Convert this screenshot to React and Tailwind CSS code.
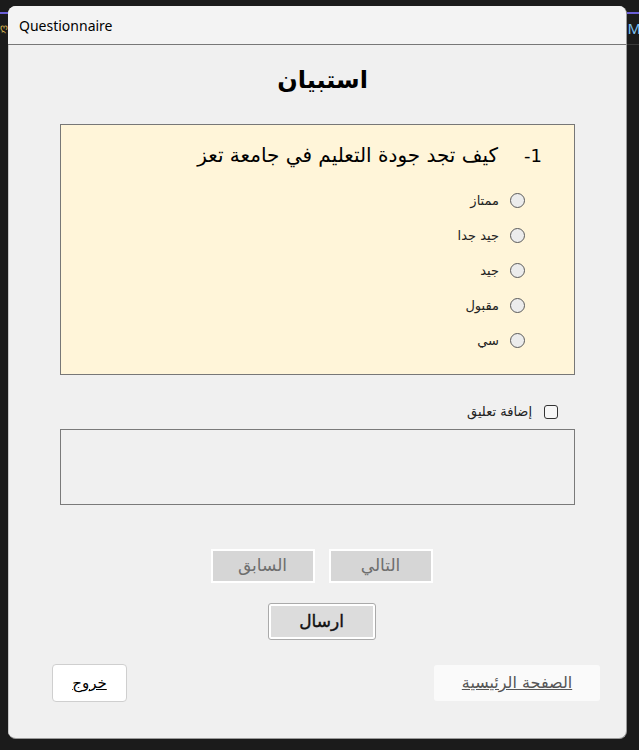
import React from "react";

const ar = { fontFamily: '"DejaVu Sans", "Noto Sans", sans-serif' };

function Radio({ label }) {
  return (
    <div className="flex items-center h-[35px] gap-[11px]">
      <span className="w-[15px] h-[15px] rounded-full border border-[#5a5a5a] bg-[#ececec] shrink-0" />
      <span className="text-[13px] text-[#222]" style={ar}>{label}</span>
    </div>
  );
}

export default function App() {
  return (
    <div className="w-[639px] h-[750px] bg-[#1b1b1b] relative overflow-hidden">
      <div className="absolute left-0 top-[12px] w-[8px] h-[2px] bg-[#6b5fd6]" />
      <div className="absolute right-0 top-[12px] w-[12px] h-[2px] bg-[#6b5fd6]" />
      <div className="absolute right-0 top-[44px] w-[12px] h-[1px] bg-[#3a3a3a]" />
      <div className="absolute right-[-2px] top-[17px] text-[15px] text-[#7ec3f2]" style={{ fontFamily: '"Noto Sans", sans-serif' }}>M</div>
      <div className="absolute left-0 top-[20px] text-[10px] text-[#d8b450]">ღ</div>
      <div className="absolute ml-[8px] mt-[6px] left-0 top-0 w-[619px] h-[733px] rounded-[8px] bg-[#f0f0f0] overflow-hidden border-r border-b border-[#9a9a9a] flex flex-col">
        <div className="h-[39px] bg-[#f3f3f3] border-b border-[#777] flex items-center pl-[11px] shrink-0">
          <span className="text-[14px] text-black" style={{ fontFamily: '"Noto Sans", sans-serif' }}>Questionnaire</span>
        </div>
        <div className="flex-1 flex flex-col items-center border-l border-[#c8c8c8]" dir="rtl">
          <div className="mt-[17px] h-[36px] pl-[10px] flex items-center text-[24px] font-bold text-black" style={ar}>استبيان</div>
          <div className="mt-[26px] w-[515px] h-[251px] bg-[#fff5d9] border border-[#777] flex flex-col self-center">
            <div className="flex items-center mt-[15px] pr-[32px] h-[30px] text-[20px] text-black" style={ar}>
              <span className="text-[18px]">1-</span>
              <span className="mr-[26px]">كيف تجد جودة التعليم في جامعة تعز</span>
            </div>
            <div className="flex flex-col pr-[49px] mt-[13px]">
              <Radio label="ممتاز" />
              <Radio label="جيد جدا" />
              <Radio label="جيد" />
              <Radio label="مقبول" />
              <Radio label="سي" />
            </div>
          </div>
          <div className="w-[515px] flex items-center mt-[29px] pr-[17px] gap-[12px] h-[16px]">
            <span className="w-[14px] h-[14px] rounded-[3px] border border-[#333] bg-[#f7f7f7]" />
            <span className="text-[13px] text-[#222]" style={ar}>إضافة تعليق</span>
          </div>
          <div className="w-[515px] h-[76px] mt-[9px] border border-[#7a7a7a] bg-[#f0f0f0]" />
          <div className="flex gap-[14px] mt-[44px] pl-[8px]" style={ar}>
            <button className="w-[104px] h-[34px] bg-[#d6d6d6] border-2 border-white text-[17px] text-[#6e6e6e] flex items-center justify-center">التالي</button>
            <button className="w-[104px] h-[34px] bg-[#d6d6d6] border-2 border-white text-[17px] text-[#6e6e6e] flex items-center justify-center">السابق</button>
          </div>
          <div className="pl-[8px] mt-[21px]">
            <button className="w-[106px] h-[35px] bg-[#dcdcdc] border-2 border-white outline outline-1 outline-[#aaa] rounded-[2px] text-[17px] text-[#111] flex items-center justify-center" style={{ ...ar, WebkitTextStroke: "0.4px #111" }}>ارسال</button>
          </div>
          <div className="w-full flex justify-between items-center mt-[25px] pr-[26px] pl-[43px]" style={ar}>
            <button className="w-[166px] h-[36px] bg-[#fafafa] rounded-[3px] text-[16px] text-[#555] underline flex items-center justify-center">الصفحة الرئيسية</button>
            <button className="w-[75px] h-[38px] bg-white rounded-[4px] border border-[#cfcfcf] text-[15px] text-black underline flex items-center justify-center">خروج</button>
          </div>
        </div>
      </div>
    </div>
  );
}
